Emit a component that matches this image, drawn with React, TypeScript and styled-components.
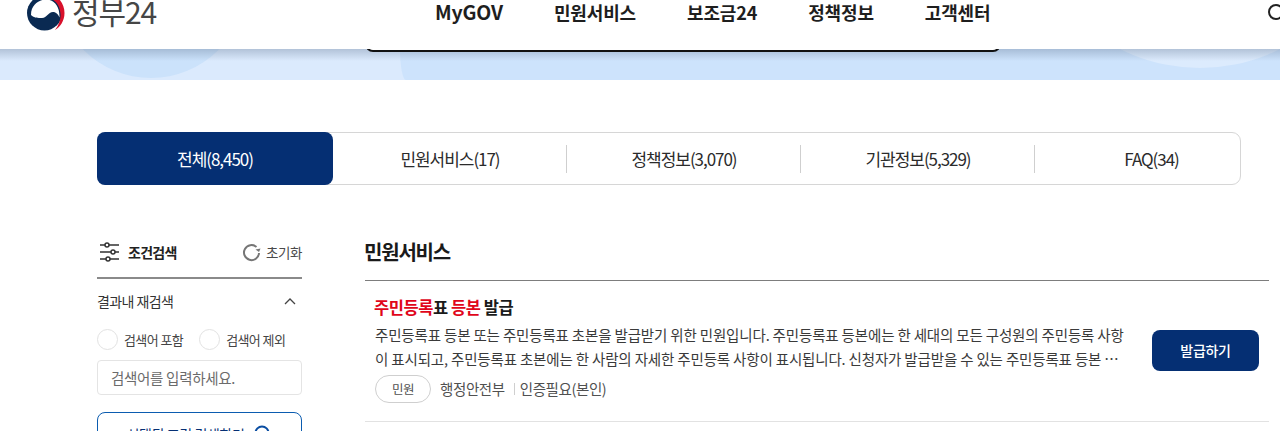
import styled, { createGlobalStyle } from "styled-components";

const GlobalStyle = createGlobalStyle`
    html, body {
        margin: 0;
        padding: 0;
        height: 431px;
        overflow: hidden;
        background: #ffffff;
        font-family: "Noto Sans CJK KR", "Noto Sans", sans-serif;
        color: #1e1e1e;
    }
    * { box-sizing: border-box; }
`;

const Page = styled.div`
    height: 431px;
    overflow: hidden;
`;

const Header = styled.header`
    position: relative;
    z-index: 2;
    height: 49px;
    background: #ffffff;
    display: flex;
    align-items: flex-start;
    overflow: hidden;
    padding-left: 27px;
`;

const Logo = styled.div`
    display: flex;
    align-items: center;
    width: 408px;
    height: 38px;
    margin-top: -6px;
    flex-shrink: 0;
`;

const LogoText = styled.span`
    font-size: 30px;
    font-weight: 400;
    letter-spacing: -1.1px;
    color: #464646;
    margin-left: 7px;
    line-height: 38px;
    margin-top: -5px;
`;

const Nav = styled.nav`
    display: flex;
    gap: 51px;
    height: 24px;
    align-items: center;
`;

const NavItem = styled.a<{ $latin?: boolean }>`
    font-size: ${(p) => (p.$latin ? "19.5px" : "18px")};
    font-weight: 700;
    letter-spacing: -0.15px;
    color: #1e1e1e;
    line-height: 24px;
    white-space: nowrap;
`;

const SearchGlyph = styled.svg`
    position: absolute;
    left: 1267px;
    top: 3px;
`;

const Hero = styled.div`
    position: relative;
    height: 31px;
    background: #dbeafd;
    overflow: hidden;

    &::after {
        content: "";
        position: absolute;
        inset: 0 0 auto 0;
        height: 12px;
        background: linear-gradient(rgba(60, 80, 110, 0.26), rgba(60, 80, 110, 0));
    }
`;

const HeroCircle = styled.div<{ $x: number; $y: number; $size: number; $color: string }>`
    position: absolute;
    left: ${(p) => p.$x}px;
    top: ${(p) => p.$y}px;
    width: ${(p) => p.$size}px;
    height: ${(p) => p.$size}px;
    border-radius: 50%;
    background: ${(p) => p.$color};
`;

const HeroRight = styled.div`
    position: absolute;
    left: 400px;
    right: 0;
    top: 0;
    bottom: 0;
    background: #cde3fc;
    border-bottom-left-radius: 6px 31px;
`;

const SearchBoxEdge = styled.div`
    position: absolute;
    z-index: 1;
    left: 365px;
    top: -30px;
    width: 636px;
    height: 33px;
    border: 2px solid #111111;
    border-radius: 8px;
    background: #ffffff;
`;

const Main = styled.main`
    padding: 52px 39px 0 97px;
`;

const Tabs = styled.div`
    display: grid;
    grid-template-columns: 235px 234px 234px 234px 207px;
    height: 53px;
    border: 1px solid #d6d6d6;
    border-radius: 9px;
`;

const Tab = styled.div<{ $active?: boolean; $divider?: boolean; $last?: boolean }>`
    position: relative;
    display: flex;
    align-items: center;
    justify-content: center;
    font-size: 17px;
    letter-spacing: -1.05px;
    color: ${(p) => (p.$active ? "#ffffff" : "#2b2b2b")};
    background: ${(p) => (p.$active ? "#052f73" : "transparent")};
    border-radius: ${(p) => (p.$active ? "8px" : "0")};
    margin: ${(p) => (p.$active ? "-1px 0 -1px -1px" : "0")};
    padding-left: ${(p) => (p.$last ? "26px" : "0")};
    padding-bottom: 1px;

    ${(p) =>
        p.$divider &&
        `
        &::before {
            content: "";
            position: absolute;
            left: -1px;
            top: 12px;
            height: 28px;
            width: 1px;
            background: #cfcfcf;
        }
    `}
`;

const Columns = styled.div`
    display: grid;
    grid-template-columns: 205px 1fr;
    column-gap: 63px;
    margin-top: 45px;
    margin-right: -28px;
`;

const Sidebar = styled.aside``;

const SidebarHead = styled.div`
    display: flex;
    align-items: center;
    height: 49px;
    border-bottom: 2px solid #8a8a8a;
    padding: 0 0 3px 2px;
`;

const SidebarTitle = styled.span`
    font-size: 14px;
    font-weight: 700;
    letter-spacing: -0.75px;
    color: #222222;
    margin-left: 8px;
`;

const Reset = styled.span`
    display: flex;
    align-items: center;
    margin-left: auto;
    font-size: 13.5px;
    letter-spacing: -0.4px;
    color: #4a4a4a;
    gap: 4px;
`;

const FilterRow = styled.div`
    display: flex;
    align-items: center;
    justify-content: space-between;
    height: 20px;
    margin-top: 12px;
    padding-right: 6px;
    font-size: 14px;
    letter-spacing: -0.6px;
    color: #333333;
`;

const RadioRow = styled.div`
    display: flex;
    align-items: center;
    gap: 16px;
    margin-top: 18px;
`;

const RadioLabel = styled.label`
    display: flex;
    align-items: center;
    gap: 6px;
    font-size: 13px;
    letter-spacing: -0.6px;
    color: #444444;
`;

const RadioDot = styled.span`
    width: 21px;
    height: 21px;
    border: 1px solid #e2e2e2;
    border-radius: 50%;
    background: #ffffff;
`;

const KeywordInput = styled.div`
    display: flex;
    align-items: center;
    height: 35px;
    margin-top: 10px;
    padding: 0 13px;
    border: 1px solid #e4e4e4;
    border-radius: 4px;
    font-size: 14.5px;
    letter-spacing: -0.3px;
    color: #6b6b6b;
`;

const ApplyButton = styled.div`
    display: flex;
    align-items: center;
    justify-content: center;
    gap: 10px;
    height: 44px;
    margin-top: 17px;
    border: 1px solid #0b5cb0;
    border-radius: 8px;
    font-size: 14px;
    letter-spacing: -0.4px;
    color: #052f73;
`;

const Results = styled.section``;

const SectionTitle = styled.h2`
    height: 51px;
    margin: 0;
    border-bottom: 1px solid #7d7d7d;
    font-size: 20px;
    line-height: 44px;
    font-weight: 700;
    letter-spacing: -1.2px;
    text-indent: -1px;
    color: #1a1a1a;
`;

const ResultRow = styled.article`
    display: flex;
    align-items: center;
    justify-content: space-between;
    height: 141px;
    padding: 0 10px;
    border-bottom: 1px solid #e2e2e2;
`;

const ResultBody = styled.div`
    width: 752px;
    margin-top: -5px;
`;

const ResultTitle = styled.h3`
    margin: 0;
    font-size: 16.5px;
    line-height: 24px;
    font-weight: 700;
    letter-spacing: -0.45px;
    text-indent: -1px;
    color: #1a1a1a;
`;

const Highlight = styled.span`
    color: #e0061a;
`;

const ResultText = styled.p`
    display: -webkit-box;
    -webkit-box-orient: vertical;
    -webkit-line-clamp: 2;
    overflow: hidden;
    margin: 4px 0 0;
    font-size: 14.5px;
    line-height: 24px;
    letter-spacing: -0.16px;
    word-break: break-all;
    color: #3a3a3a;
`;

const MetaRow = styled.div`
    display: flex;
    align-items: center;
    margin-top: 4px;
    font-size: 14.5px;
    letter-spacing: -0.4px;
    color: #505050;
`;

const Badge = styled.span`
    display: flex;
    align-items: center;
    justify-content: center;
    width: 56px;
    height: 28px;
    margin-right: 9px;
    border: 1px solid #cfcfcf;
    border-radius: 14px;
    font-size: 12.5px;
    color: #505050;
`;

const MetaSep = styled.span`
    width: 1px;
    height: 12px;
    margin: 0 5px 0 9px;
    background: #cfcfcf;
`;

const IssueButton = styled.button`
    width: 107px;
    height: 41px;
    margin-top: -2px;
    border: none;
    border-radius: 8px;
    background: #052f73;
    color: #ffffff;
    font-family: inherit;
    font-size: 14px;
    font-weight: 500;
    letter-spacing: -0.3px;
`;

const TaegeukLogo = () => (
    <svg width="38" height="38" viewBox="0 0 38 38">
        <circle cx="17.5" cy="19" r="17.5" fill="#0a2a52" />
        <path d="M4 21C4 10 13 5.500 19 5.500c8 0 14 7 13.500 18-1-3-3.500-5.500-6.500-5.500-5 0-6 6-11 6-4 0-8 0-11-3z" fill="#ffffff" />
        <path d="M24 0C33 3 37.500 11 37.500 19c0 8-4.500 14-9.500 17 4-5 6-11 5.500-16C33 11 28 5 20 3.500z" fill="#d8112b" />
    </svg>
);

const FilterIcon = () => (
    <svg width="21" height="20" viewBox="0 0 21 20" fill="none" stroke="#333" strokeWidth="1.5">
        <path d="M1 3h5M10 3h10M1 10h11M16 10h4M1 17h6M11 17h9" />
        <circle cx="8" cy="3" r="2" />
        <circle cx="14" cy="10" r="2" />
        <circle cx="9" cy="17" r="2" />
    </svg>
);

const ResetIcon = () => (
    <svg width="20" height="20" viewBox="0 0 20 20" fill="none">
        <path d="M14.500 5A7.500 7.500 0 1 0 17 11" stroke="#767676" strokeWidth="2" />
        <path d="M18.500 6.500l-1.500 3.500-3.500-2.500z" fill="#767676" />
    </svg>
);

const ChevronUp = () => (
    <svg width="12" height="8" viewBox="0 0 12 8" fill="none" stroke="#444" strokeWidth="1.3">
        <path d="M1 7l5-5 5 5" />
    </svg>
);

const TABS = [
    { label: "전체(8,450)", active: true },
    { label: "민원서비스(17)" },
    { label: "정책정보(3,070)", divider: true },
    { label: "기관정보(5,329)", divider: true },
    { label: "FAQ(34)", divider: true, last: true },
];

const NAV_ITEMS = ["MyGOV", "민원서비스", "보조금24", "정책정보", "고객센터"];

const App = () => {
    return (
        <Page>
            <GlobalStyle />
            <Header>
                <Logo>
                    <TaegeukLogo />
                    <LogoText>정부24</LogoText>
                </Logo>
                <Nav>
                    {NAV_ITEMS.map((item) => (
                        <NavItem key={item} $latin={item === "MyGOV"}>
                            {item}
                        </NavItem>
                    ))}
                </Nav>
                <SearchGlyph width="20" height="20" viewBox="0 0 20 20" fill="none" stroke="#222" strokeWidth="2">
                    <circle cx="9" cy="9" r="7" />
                </SearchGlyph>
            </Header>
            <Hero>
                <HeroRight />
                <HeroCircle $x={56} $y={-161} $size={190} $color="#cbe2fb" />
                <HeroCircle $x={1022} $y={-337} $size={356} $color="#dcebfd" />
                <SearchBoxEdge />
            </Hero>
            <Main>
                <Tabs>
                    {TABS.map((tab) => (
                        <Tab key={tab.label} $active={tab.active} $divider={tab.divider} $last={tab.last}>
                            {tab.label}
                        </Tab>
                    ))}
                </Tabs>
                <Columns>
                    <Sidebar>
                        <SidebarHead>
                            <FilterIcon />
                            <SidebarTitle>조건검색</SidebarTitle>
                            <Reset>
                                <ResetIcon />
                                초기화
                            </Reset>
                        </SidebarHead>
                        <FilterRow>
                            결과내 재검색
                            <ChevronUp />
                        </FilterRow>
                        <RadioRow>
                            <RadioLabel>
                                <RadioDot />
                                검색어 포함
                            </RadioLabel>
                            <RadioLabel>
                                <RadioDot />
                                검색어 제외
                            </RadioLabel>
                        </RadioRow>
                        <KeywordInput>검색어를 입력하세요.</KeywordInput>
                        <ApplyButton>
                            선택된 조건 검색하기
                            <svg width="18" height="18" viewBox="0 0 18 18" fill="none" stroke="#0b4ea2" strokeWidth="2">
                                <circle cx="8" cy="8" r="6.5" />
                                <path d="M12.5 12.5L17 17" />
                            </svg>
                        </ApplyButton>
                    </Sidebar>
                    <Results>
                        <SectionTitle>민원서비스</SectionTitle>
                        <ResultRow>
                            <ResultBody>
                                <ResultTitle>
                                    <Highlight>주민등록</Highlight>표 <Highlight>등본</Highlight> 발급
                                </ResultTitle>
                                <ResultText>
                                    주민등록표 등본 또는 주민등록표 초본을 발급받기 위한 민원입니다. 주민등록표 등본에는 한 세대의 모든 구성원의 주민등록 사항이 표시되고, 주민등록표 초본에는 한 사람의 자세한 주민등록 사항이 표시됩니다. 신청자가 발급받을 수 있는 주민등록표 등본 및 초본의 종류와 발급 방법을 안내합니다.
                                </ResultText>
                                <MetaRow>
                                    <Badge>민원</Badge>
                                    행정안전부
                                    <MetaSep />
                                    인증필요(본인)
                                </MetaRow>
                            </ResultBody>
                            <IssueButton>발급하기</IssueButton>
                        </ResultRow>
                    </Results>
                </Columns>
            </Main>
        </Page>
    );
};

export default App;
